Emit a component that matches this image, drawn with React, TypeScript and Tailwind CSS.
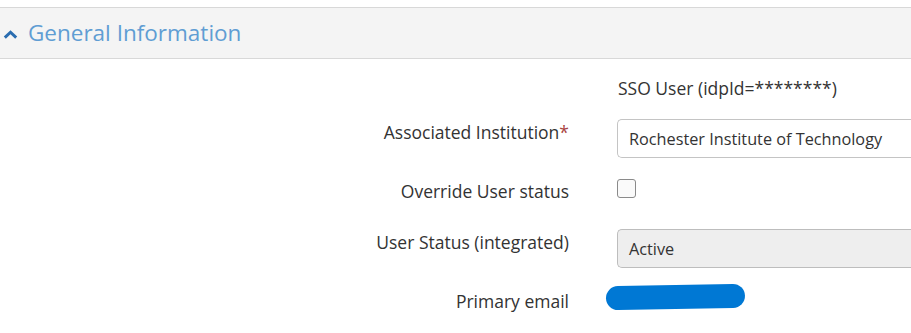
import React from 'react';

function FormRow({ label, labelPad, children, className = '' }: { label: React.ReactNode; labelPad: string; children: React.ReactNode; className?: string }) {
  return (
    <div className={`flex items-start ${className}`}>
      <div className={`w-[569px] shrink-0 text-right text-[17.5px] leading-[24px] text-[#333] ${labelPad}`}>{label}</div>
      <div className="ml-[48px] flex-1 min-w-0">{children}</div>
    </div>
  );
}

export default function App() {
  return (
    <div className="w-[911px] h-[333px] overflow-hidden bg-white font-['Open_Sans',sans-serif] pt-[7px]">
      {/* Section header */}
      <div className="flex items-center h-[52px] bg-[#f4f4f4] border-y border-[#d8d8d8] pl-[3px]">
        <svg className="w-[15px] h-[9px] mt-[2px]" viewBox="0 0 15 9">
          <path d="M1.8 7.6 L7.5 2.2 L13.2 7.6" fill="none" stroke="#2a6db0" strokeWidth="3" />
        </svg>
        <span className="ml-[10px] text-[22.5px] text-[#5f9dd3] leading-none">General Information</span>
      </div>

      <div className="flex flex-col">
        <div className="pl-[618px] pt-[17px] text-[17.5px] text-[#333] leading-[24px]">SSO User (idpId=********)</div>

        <FormRow className="mt-[19px]" labelPad="pt-[1px]" label={<>Associated Institution<span className="text-[#a94442]">*</span></>}>
          <div className="h-[39px] flex items-center pl-[11px] pt-[1px] border border-[#c4c4c4] rounded-l-[5px] border-r-0 text-[16.25px] text-[#333] whitespace-nowrap">
            Rochester Institute of Technology
          </div>
        </FormRow>

        <FormRow className="mt-[21px]" labelPad="pt-0" label="Override User status">
          <div className="w-[19px] h-[19px] border border-[#8a8a8a] rounded-[3px] bg-[#fafafa]" />
        </FormRow>

        <FormRow className="mt-[26px]" labelPad="pt-[1px]" label="User Status (integrated)">
          <div className="h-[39px] flex items-center pl-[11px] pt-[1px] border border-[#bdbdbd] rounded-l-[5px] border-r-0 bg-[#eeeeee] text-[16.25px] text-[#333]">
            Active
          </div>
        </FormRow>

        <FormRow className="mt-[17px]" labelPad="pt-[4px]" label="Primary email">
          <div className="-ml-[11px] w-[139px] h-[24px] rounded-full bg-[#0078d4] -rotate-[1deg]" />
        </FormRow>
      </div>
    </div>
  );
}
